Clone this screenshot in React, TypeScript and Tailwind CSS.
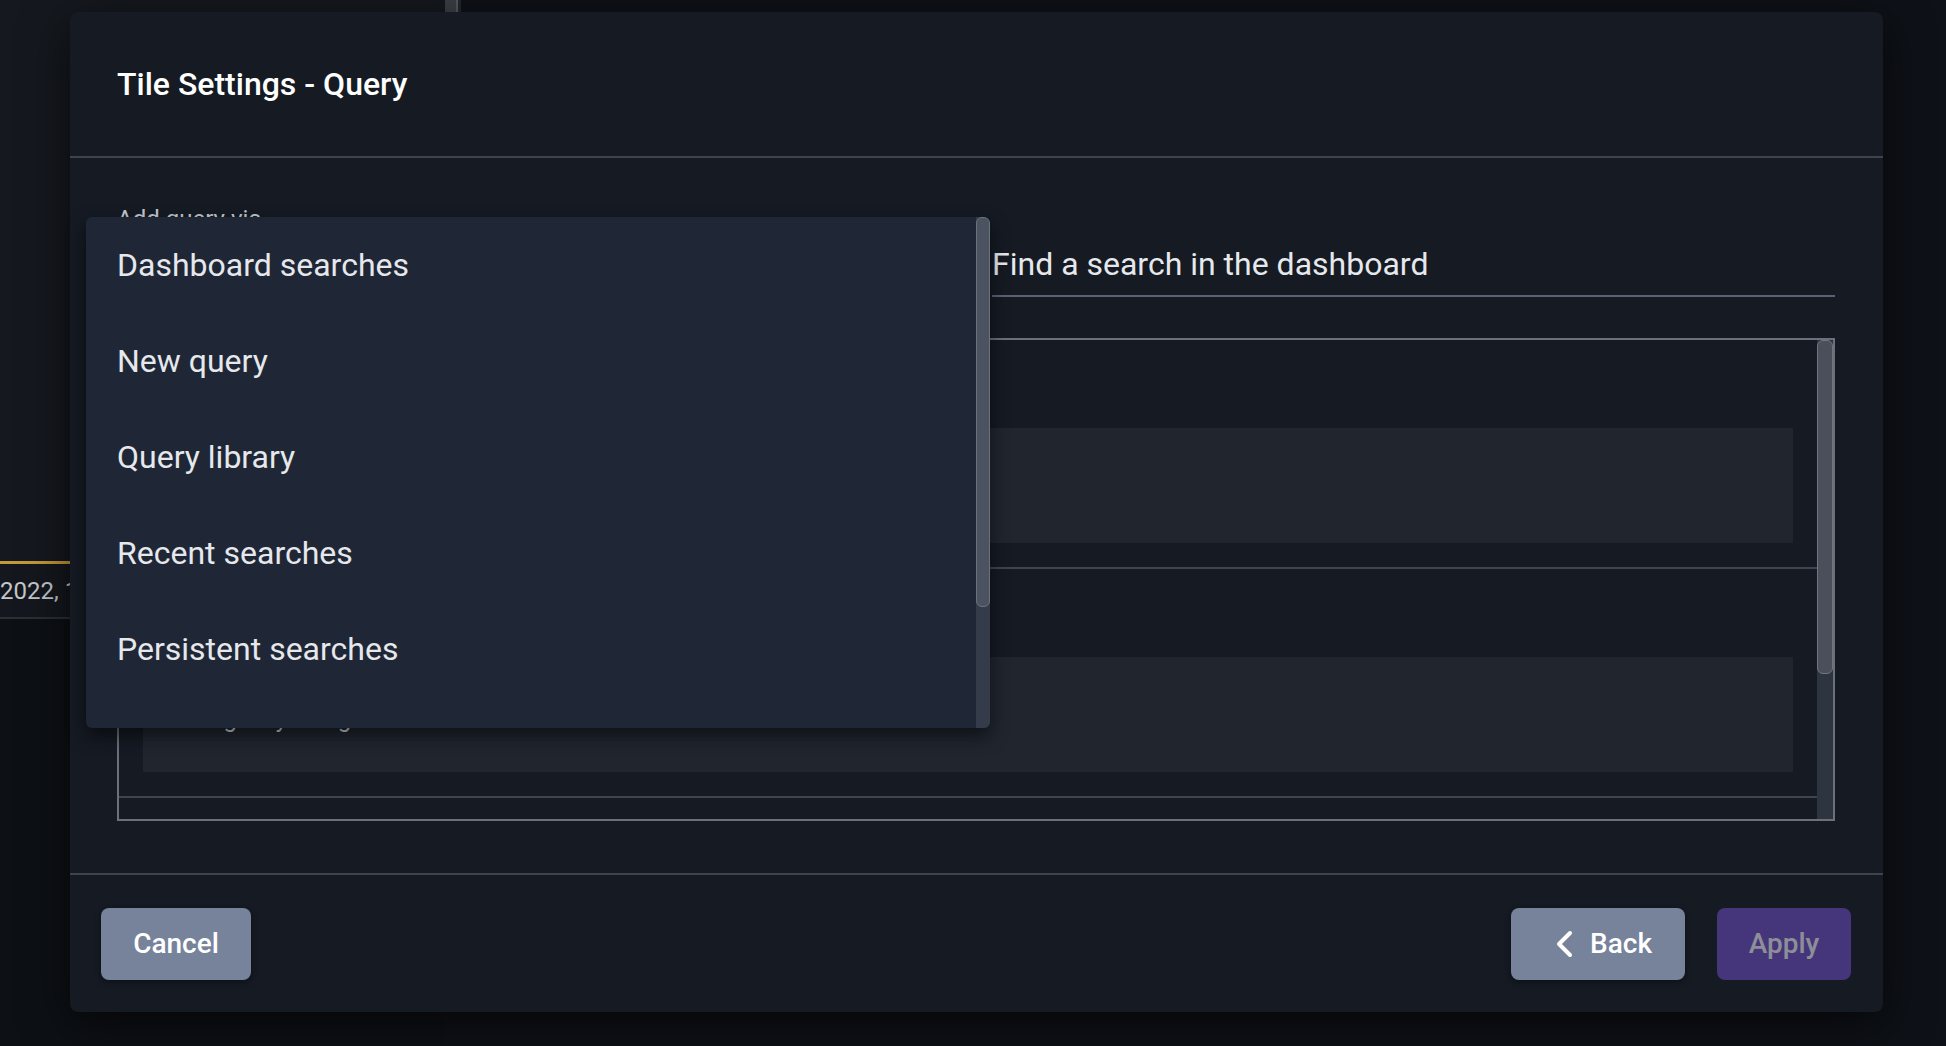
import React from 'react';

const menuItems = ['Dashboard searches', 'New query', 'Query library', 'Recent searches', 'Persistent searches', 'Saved queries', 'Shared searches'];

const tiles = [
  { title: 'Error count', query: 'Sorting only using host' },
  { title: 'Logins per hour', query: 'Sorting only using host' },
  { title: 'Slow requests', query: 'duration > 500' },
];

const font = { fontFamily: 'Roboto, "Noto Sans", sans-serif' };

const Background: React.FC = () => (
  <div className="absolute inset-0 flex">
    <div className="w-[445px] flex flex-col bg-[#14171d]">
      <div className="h-[561px] bg-[#15181e]" />
      <div className="h-[3px] bg-[#c39a3a]" />
      <div className="h-[53px] flex items-center text-[24px] text-[#c4c7cc] whitespace-nowrap overflow-hidden">2022, 14:32:10</div>
      <div className="h-[2px] bg-[#2b2f36]" />
      <div className="flex-1 bg-[#0d1015]" />
    </div>
    <div className="w-[16px] flex flex-col bg-[#0e1117]">
      <div className="h-[420px] flex">
        <div className="w-[11px] bg-[#3c3f46]" />
        <div className="w-[2px] bg-[#575a60]" />
        <div className="w-[3px] bg-[#25272c]" />
      </div>
    </div>
    <div className="flex-1 bg-[#0e1117]" />
  </div>
);

const TileRow: React.FC<{ title: string; query: string }> = ({ title, query }) => (
  <div className="border-b-2 border-[#3e4550] px-[24px] pt-[24px] pb-[24px] shrink-0">
    <div className="h-[40px] mb-[24px] flex items-center text-[28px] text-[#e5e7eb]">{title}</div>
    <div className="h-[115px] bg-[#20252e] pl-[17px] pt-[44px] text-[24px] leading-[36px] text-[#d1d5db]">{query}</div>
  </div>
);

const DropdownMenu: React.FC = () => (
  <div className="absolute left-[16px] top-[205px] w-[904px] h-[511px] bg-[#1f2736] rounded-[6px] shadow-[0_8px_18px_rgba(0,0,0,0.55)] flex overflow-hidden">
    <div className="flex-1 flex flex-col overflow-hidden">
      {menuItems.map((item) => (
        <div key={item} className="h-[96px] shrink-0 flex items-center pl-[31px] text-[32px] text-[#e6e8ec]">
          {item}
        </div>
      ))}
    </div>
    <div className="w-[14px] bg-[#343c4b] flex flex-col">
      <div className="h-[390px] rounded-[6px] bg-[#4b5361] border border-[#6b727d]" />
    </div>
  </div>
);

export default function App() {
  return (
    <div className="relative w-[1946px] h-[1046px] overflow-hidden bg-[#0e1117]" style={font}>
      <Background />

      <div className="absolute left-[70px] top-[12px] w-[1813px] h-[1000px] bg-[#151a23] rounded-[8px] shadow-[0_12px_48px_rgba(0,0,0,0.6)] flex flex-col">
        <div className="h-[146px] flex items-center px-[47px] border-b-2 border-[#3d4450] shrink-0">
          <h2 className="text-[32px] font-medium text-white">Tile Settings - Query</h2>
        </div>

        <div className="flex-1 flex flex-col pl-[47px] pr-[48px] pt-[43px]">
          <div className="h-[36px] text-[24px] leading-[36px] text-[#c3c7ce]">Add query via</div>
          <div className="flex gap-[22px]">
            <div className="w-[853px] h-[60px] flex items-end pb-[12px] border-b-2 border-[#596273] text-[32px] leading-[38px] text-[#e6e8ec]">
              Dashboard searches
            </div>
            <div className="flex-1 h-[60px] flex items-end pb-[12px] border-b-2 border-[#596273] text-[32px] leading-[38px] text-[#e6e8ec]">
              Find a search in the dashboard
            </div>
          </div>

          <div className="mt-[41px] h-[483px] border-2 border-[#6b7079] flex overflow-hidden">
            <div className="flex-1 flex flex-col overflow-hidden">
              {tiles.map((t) => (
                <TileRow key={t.title} title={t.title} query={t.query} />
              ))}
            </div>
            <div className="w-[16px] bg-[#2e3440] flex flex-col">
              <div className="h-[334px] rounded-[6px] bg-[#4a4f59] border border-[#70757e]" />
            </div>
          </div>
        </div>

        <div className="border-t-2 border-[#3d4450] pt-[33px] pb-[32px] pl-[31px] pr-[32px] flex items-center shrink-0">
          <button className="w-[150px] h-[72px] rounded-[8px] bg-[#77829b] text-white text-[28px] font-medium shadow-[0_2px_6px_rgba(0,0,0,0.4)]">
            Cancel
          </button>
          <div className="flex-1" />
          <button className="w-[174px] h-[72px] rounded-[8px] bg-[#77829b] text-white text-[28px] font-medium shadow-[0_2px_6px_rgba(0,0,0,0.4)] flex items-center justify-center gap-[16px] pl-[10px]">
            <svg width="20" height="28" viewBox="0 0 20 28" fill="none">
              <path d="M16 3 L5 14 L16 25" stroke="white" strokeWidth="4" strokeLinecap="round" strokeLinejoin="round" />
            </svg>
            <span>Back</span>
          </button>
          <button className="ml-[32px] w-[134px] h-[72px] rounded-[8px] bg-[#45367b] text-[#8e8e98] text-[28px] font-medium">
            Apply
          </button>
        </div>

        <DropdownMenu />
      </div>
    </div>
  );
}
